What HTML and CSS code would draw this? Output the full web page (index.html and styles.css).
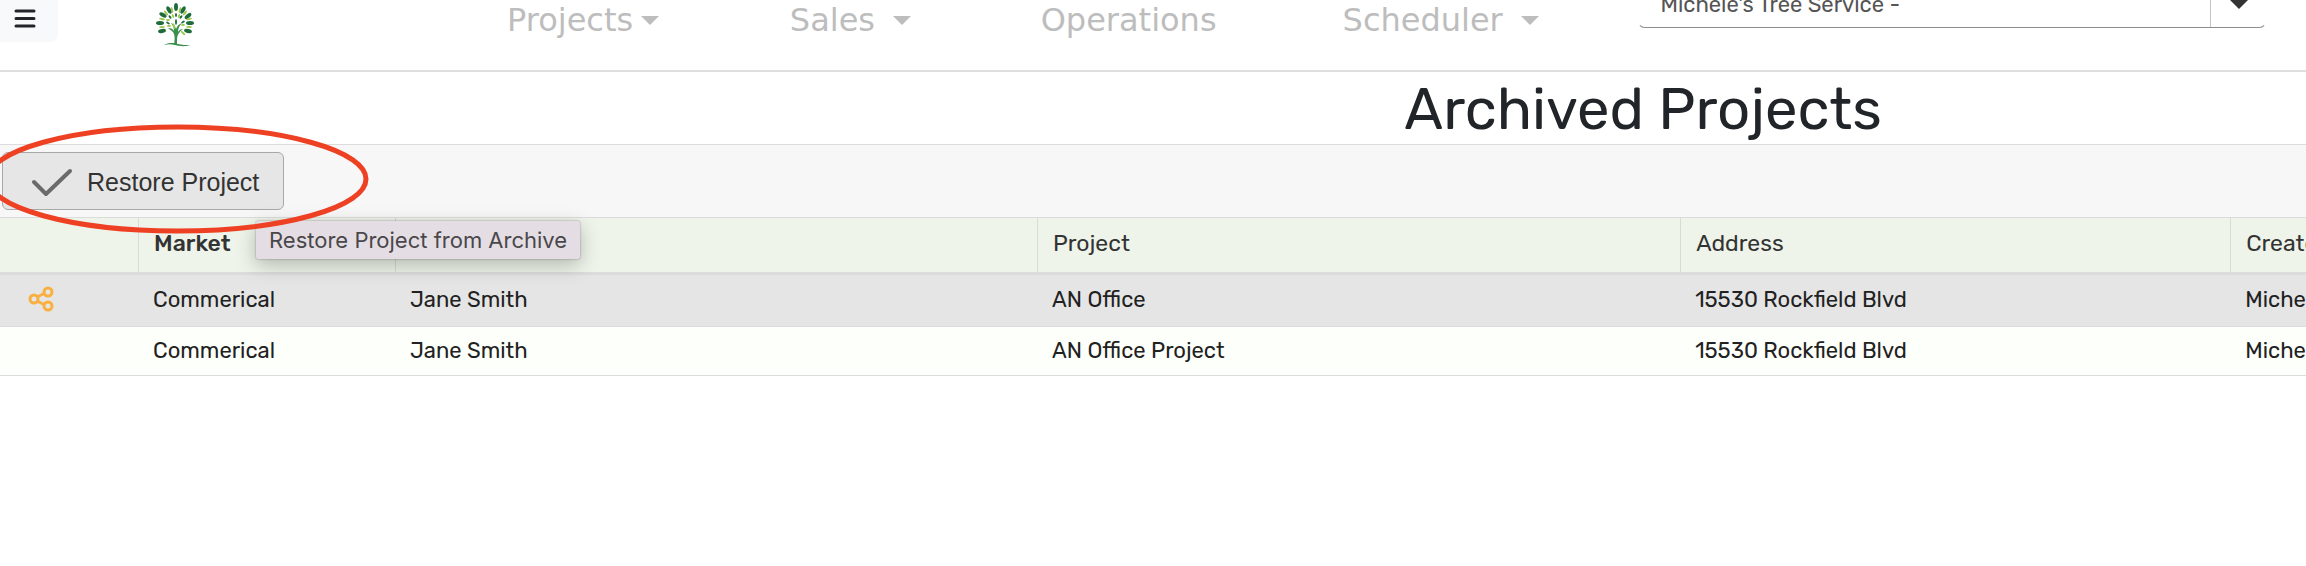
FILE: index.html
```html
<!DOCTYPE html>
<html lang="en">
<head>
    <meta charset="UTF-8">
    <meta name="viewport" content="width=device-width, initial-scale=1.0">
    <title>Archived Projects</title>
    <link rel="stylesheet" href="styles.css">
</head>
<body>

    <!-- Top navigation -->
    <header class="topbar">
        <button class="menu-btn" type="button" aria-label="Menu">
            <svg width="22" height="20" viewBox="0 0 22 20" fill="none" stroke="#212529" stroke-width="3" stroke-linecap="round">
                <path d="M2 3h18M2 10.500h18M2 18h18"/>
            </svg>
        </button>
        <a class="logo" href="#" aria-label="Home">
            <svg width="40" height="44" viewBox="0 0 40 44">
                <path d="M18 42c1-6 1-10-1-13-2-2-4-3-5-4 3 0 5 1 6 3 0-3-1-6-3-8 3 1 4 3 5 6 1-3 3-5 6-6-3 3-4 6-4 9 1-2 3-3 5-3-4 3-6 6-6 10v6z" fill="#3a8f4c"/>
                <path d="M8 42c5-3 10-2 14-1 4 1 8 1 12 1-5 2-11 1-15 0-4-1-7-1-11 0z" fill="#3a8f4c"/>
                <g fill="#1f6b3c">
                    <ellipse cx="20" cy="4" rx="2" ry="4"/>
                    <ellipse cx="13" cy="7" rx="2" ry="4" transform="rotate(-30 13 7)"/>
                    <ellipse cx="27" cy="7" rx="2" ry="4" transform="rotate(30 27 7)"/>
                    <ellipse cx="7" cy="12" rx="2" ry="4" transform="rotate(-60 7 12)"/>
                    <ellipse cx="32" cy="13" rx="2" ry="4" transform="rotate(50 32 13)"/>
                    <ellipse cx="4" cy="20" rx="4" ry="2"/>
                    <ellipse cx="34" cy="20" rx="4" ry="2"/>
                    <ellipse cx="6" cy="28" rx="4" ry="2" transform="rotate(-12 6 28)"/>
                    <ellipse cx="32" cy="28" rx="4" ry="2" transform="rotate(15 32 28)"/>
                    <ellipse cx="20" cy="12" rx="1" ry="2"/>
                    <ellipse cx="20" cy="19" rx="1" ry="3"/>
                    <ellipse cx="14" cy="14" rx="1" ry="2" transform="rotate(-40 14 14)"/>
                    <ellipse cx="25" cy="14" rx="1" ry="2" transform="rotate(40 25 14)"/>
                    <ellipse cx="12" cy="20" rx="2" ry="1" transform="rotate(30 12 20)"/>
                    <ellipse cx="27" cy="19" rx="2" ry="1" transform="rotate(-30 27 19)"/>
                </g>
                <g fill="#9aca4c">
                    <ellipse cx="16" cy="7" rx="1" ry="3" transform="rotate(-15 16 7)"/>
                    <ellipse cx="24" cy="7" rx="1" ry="3" transform="rotate(15 24 7)"/>
                    <ellipse cx="10" cy="10" rx="1" ry="3" transform="rotate(-40 10 10)"/>
                    <ellipse cx="29" cy="10" rx="1" ry="3" transform="rotate(40 29 10)"/>
                    <ellipse cx="6" cy="16" rx="3" ry="1" transform="rotate(10 6 16)"/>
                    <ellipse cx="33" cy="16" rx="3" ry="1" transform="rotate(-10 33 16)"/>
                    <ellipse cx="6" cy="24" rx="3" ry="1"/>
                    <ellipse cx="33" cy="24" rx="3" ry="1"/>
                    <ellipse cx="27" cy="30" rx="1" ry="3" transform="rotate(-45 27 30)"/>
                    <ellipse cx="17" cy="13" rx="1" ry="2" transform="rotate(-20 17 13)"/>
                    <ellipse cx="23" cy="13" rx="1" ry="2" transform="rotate(20 23 13)"/>
                    <ellipse cx="12" cy="17" rx="2" ry="1"/>
                    <ellipse cx="27" cy="22" rx="2" ry="1"/>
                    <ellipse cx="13" cy="23" rx="2" ry="1"/>
                    <ellipse cx="18" cy="23" rx="1" ry="3" transform="rotate(-20 18 23)"/>
                </g>
            </svg>
        </a>
        <nav class="nav">
            <a class="nav-link" href="#">Projects<span class="caret"></span></a>
            <a class="nav-link" href="#">Sales<span class="caret caret-spaced"></span></a>
            <a class="nav-link" href="#">Operations</a>
            <a class="nav-link" href="#">Scheduler<span class="caret caret-spaced"></span></a>
        </nav>
        <div class="company">
            <select class="company-select" aria-label="Company">
                <option>Michele's Tree Service -</option>
            </select>
            <span class="company-arrow"></span>
        </div>
    </header>

    <!-- Archived projects, the sheet is wider than the window -->
    <main class="content">
        <div class="sheet">
            <h1 class="title">Archived Projects</h1>

            <div class="toolbar">
                <button class="restore-btn" type="button" aria-describedby="restore-tip">
                    <svg width="42" height="30" viewBox="0 0 42 30" fill="none" stroke="#6b6b6b" stroke-width="4" stroke-linecap="round" stroke-linejoin="round">
                        <path d="M3 15l12 12L39 4"/>
                    </svg>
                    Restore Project
                </button>
                <svg class="highlight" width="372" height="112" viewBox="0 0 372 112" fill="none">
                    <ellipse cx="177" cy="56" rx="189" ry="52" stroke="#ee4023" stroke-width="5"/>
                </svg>
                <div class="tooltip" id="restore-tip" role="tooltip">Restore Project from Archive</div>
            </div>

            <table class="grid">
                <colgroup>
                    <col class="col-icon">
                    <col class="col-market">
                    <col class="col-client">
                    <col class="col-project">
                    <col class="col-address">
                    <col>
                </colgroup>
                <thead>
                    <tr>
                        <th></th>
                        <th class="sorted">Market</th>
                        <th></th>
                        <th>Project</th>
                        <th>Address</th>
                        <th>Created By</th>
                    </tr>
                </thead>
                <tbody>
                    <tr class="selected">
                        <td class="icon-cell">
                            <svg width="26" height="26" viewBox="0 0 26 26" fill="none" stroke="#f9b040" stroke-width="3">
                                <circle cx="6" cy="13" r="4"/>
                                <circle cx="20" cy="6" r="4"/>
                                <circle cx="20" cy="20" r="4"/>
                                <path d="M9 11l8-4M9 15l8 4"/>
                            </svg>
                        </td>
                        <td>Commerical</td>
                        <td>Jane Smith</td>
                        <td>AN Office</td>
                        <td>15530 Rockfield Blvd</td>
                        <td>Michele</td>
                    </tr>
                    <tr>
                        <td></td>
                        <td>Commerical</td>
                        <td>Jane Smith</td>
                        <td>AN Office Project</td>
                        <td>15530 Rockfield Blvd</td>
                        <td>Michele</td>
                    </tr>
                </tbody>
            </table>
        </div>
    </main>

</body>
</html>
```
FILE: styles.css
```css
* {
    box-sizing: border-box;
}

body {
    margin: 0;
    background-color: #fff;
    color: #212121;
    font-family: Rubik, Roboto, sans-serif;
    font-size: 22px;
}

/* Top navigation */
.topbar {
    display: flex;
    align-items: flex-start;
    height: 72px;
    border-bottom: 2px solid #dedede;
    overflow: hidden;
}

.menu-btn {
    width: 58px;
    height: 42px;
    padding: 0 0 6px 14px;
    border: none;
    border-radius: 0 0 8px 0;
    background-color: #f8f9fa;
    text-align: left;
    line-height: 0;
}

.logo {
    margin-left: 98px;
    padding-top: 3px;
    line-height: 0;
}

.nav {
    flex: 1;
    display: grid;
    grid-template-columns: 282fr 250fr 301fr 294fr;
    margin-left: 311px;
}

.nav-link {
    display: flex;
    align-items: center;
    color: #bdbdbd;
    font-family: Verdana, "DejaVu Sans", sans-serif;
    font-size: 32px;
    line-height: 40px;
    text-decoration: none;
    white-space: nowrap;
}

.caret {
    margin-left: 8px;
    border: 9px solid transparent;
    border-top-color: #bdbdbd;
    border-bottom: 0;
}

.caret-spaced {
    margin-left: 18px;
}

/* Company picker */
.company {
    position: relative;
    width: 27.3%;
    margin-top: -28px;
    margin-right: 39px;
}

.company-select {
    width: 100%;
    height: 56px;
    padding: 8px 22px 0;
    appearance: none;
    border: 1px solid #fff;
    border-bottom-color: #8c8c8c;
    border-radius: 8px;
    background-color: #fff;
    color: #555;
    font-family: inherit;
    font-size: 22px;
}

.company-arrow {
    position: absolute;
    top: 0;
    right: 0;
    width: 57px;
    height: 55px;
    border-left: 1px solid #c4c4c4;
    pointer-events: none;
}

.company-arrow::after {
    content: "";
    position: absolute;
    top: 27px;
    left: 18px;
    border: 10px solid transparent;
    border-top-color: #333;
    border-bottom: 0;
}

/* Page content */
.content {
    overflow: hidden;
}

.sheet {
    width: 142.5%;
}

.title {
    margin: 0;
    padding-top: 4px;
    color: #212529;
    font-size: 58px;
    font-weight: 400;
    line-height: 68px;
    text-align: center;
}

.toolbar {
    position: relative;
    padding: 7px 2px;
    border-top: 1px solid #dcdcdc;
    border-bottom: 1px solid #dcdcdc;
    background-color: #f7f7f7;
}

.restore-btn {
    display: flex;
    align-items: center;
    gap: 14px;
    height: 58px;
    padding: 2px 24px 0 28px;
    border: 1px solid #a8a8a8;
    border-radius: 6px;
    background-color: #e6e6e6;
    color: #333;
    font-family: Helvetica, "Liberation Sans", sans-serif;
    font-size: 25px;
}

/* Ring drawn round the button */
.highlight {
    position: absolute;
    top: -22px;
    left: 0;
    z-index: 1;
    pointer-events: none;
}

.tooltip {
    position: absolute;
    top: 76px;
    left: 256px;
    padding: 0 13px;
    border-radius: 2px;
    background-color: #e4dee4;
    box-shadow: 0 0 2px rgba(0, 0, 0, 0.4), 0 6px 20px rgba(0, 0, 0, 0.25);
    color: #4a474a;
    font-family: Inter, sans-serif;
    font-size: 22px;
    line-height: 38px;
    white-space: nowrap;
}

/* Grid */
.grid {
    width: 100%;
    table-layout: fixed;
    border-collapse: separate;
    border-spacing: 0;
}

.col-icon {
    width: 4.2%;
}

.col-market {
    width: 7.82%;
}

.col-client {
    width: 19.54%;
}

.col-project {
    width: 19.57%;
}

.col-address {
    width: 16.74%;
}

.grid th {
    height: 57px;
    padding: 0 15px 4px;
    border-left: 1px solid #d8dcd6;
    border-bottom: 3px solid #dcdcdc;
    background-color: #eef4ea;
    color: #333;
    font-size: 23px;
    font-weight: 400;
    text-align: left;
}

.grid th:first-child {
    border-left: none;
}

.grid .sorted {
    font-weight: 500;
}

.grid td {
    height: 49px;
    padding: 0 15px 2px;
    border-bottom: 1px solid #dcdcdc;
    background-color: #fdfffa;
}

.grid .selected td {
    height: 52px;
    background-color: #e5e5e5;
}

.grid .icon-cell {
    padding-left: 28px;
    padding-bottom: 4px;
    line-height: 0;
}
```
